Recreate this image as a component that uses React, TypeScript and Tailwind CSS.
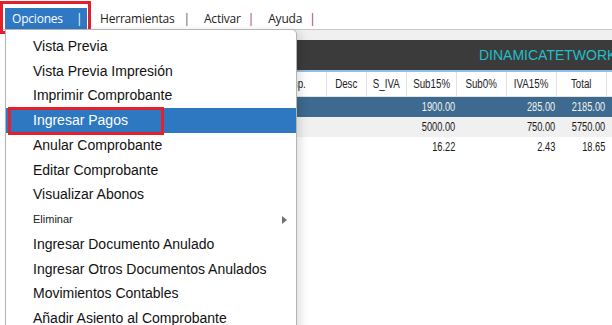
import React from "react";

const items: { label: string; small?: boolean; sub?: boolean; active?: boolean }[] = [
  { label: "Vista Previa" },
  { label: "Vista Previa Impresión" },
  { label: "Imprimir Comprobante" },
  { label: "Ingresar Pagos", active: true },
  { label: "Anular Comprobante" },
  { label: "Editar Comprobante" },
  { label: "Visualizar Abonos" },
  { label: "Eliminar", small: true, sub: true },
  { label: "Ingresar Documento Anulado" },
  { label: "Ingresar Otros Documentos Anulados" },
  { label: "Movimientos Contables" },
  { label: "Añadir Asiento al Comprobante" },
];

const headers = ["Comp.", "Desc", "S_IVA", "Sub15%", "Sub0%", "IVA15%", "Total", ""];

const rows = [
  { cls: "bg-[#3d6a8e] text-[#f2f2f2]", v: ["", "", "", "1900.00", "", "285.00", "2185.00", ""] },
  { cls: "bg-[#f0f0f0] text-[#1a1a1a]", v: ["", "", "", "5000.00", "", "750.00", "5750.00", ""] },
  { cls: "bg-white text-[#1a1a1a]", v: ["", "", "", "16.22", "", "2.43", "18.65", ""] },
];

export default function App() {
  return (
    <div className="relative w-[612px] h-[325px] overflow-hidden bg-white font-['Liberation_Sans',Arial,sans-serif]">
      {/* Top menu bar */}
      <div className="flex items-center h-[29px] pt-[8px] pl-[5px] font-['Open_Sans',sans-serif] text-[12px] tracking-[-0.2px] text-[#222]">
        <div className="relative flex items-center h-[21px] w-[82px] bg-[#2f78c4] text-white pl-[7px]">
          <span>Opciones</span>
          <span className="ml-[13px]">|</span>
          <div className="absolute left-[-5px] top-[-7px] w-[91px] h-[33px] border-[3px] border-[#e3202b]" />
        </div>
        <span className="ml-[13px]">Herramientas</span>
        <span className="ml-[9px] text-[#555]">|</span>
        <span className="ml-[14px]">Activar</span>
        <span className="ml-[7px] text-[#a3324a]">|</span>
        <span className="ml-[14px]">Ayuda</span>
        <span className="ml-[7px] text-[#a3324a]">|</span>
      </div>

      {/* Underlying page */}
      <div className="flex border-t border-[#c8c8c8]">
        <div className="w-[6px] shrink-0 bg-white border-r border-[#e4e4e4]" />
        <div className="flex-1">
          <div className="h-[10px] bg-[#f0f0f0]" />
          <div className="h-[30px] bg-[#3b3b3b] flex items-center pl-[473px] whitespace-nowrap overflow-hidden">
            <span className="text-[14px] text-[#22bfcc]">DINAMICATETWORKS</span>
          </div>
          <div className="h-[2px] bg-[#93bde6]" />
          <div className="grid grid-cols-[321px_40px_40px_50px_50px_50px_50px_1fr] h-[25px] border-b border-[#e4e4e4] text-[12.5px] text-[#222]">
            {headers.map((h, i) => (
              <div
                key={i}
                className={
                  "flex items-center border-r border-[#e2e2e2] " +
                  (i === 0 ? "justify-end pr-[20px]" : "justify-center")
                }
              >
                <span className={"inline-block scale-x-[0.78] " + (i === 0 ? "origin-right" : "origin-center")}>{h}</span>
              </div>
            ))}
          </div>
          {rows.map((r, ri) => (
            <div
              key={ri}
              className={"grid grid-cols-[321px_40px_40px_50px_50px_50px_50px_1fr] h-[20px] text-[12.5px] " + r.cls}
            >
              {r.v.map((c, ci) => (
                <div key={ci} className="flex items-center justify-end pr-[2px]">
                  <span className="inline-block scale-x-[0.74] origin-right">{c}</span>
                </div>
              ))}
            </div>
          ))}
        </div>
      </div>

      {/* Dropdown menu */}
      <div className="absolute left-[5px] top-[29px] w-[292px] h-[310px] bg-white border border-[#b4b4b4] rounded-tr-[5px] shadow-[4px_2px_8px_rgba(0,0,0,0.12)] pt-[4px]">
        {items.map((it, i) => (
          <div
            key={i}
            className={
              "relative flex items-center h-[24.75px] pl-[27px] pr-[8px] " +
              (it.active ? "bg-[#2e78c2] text-white" : "text-[#111]")
            }
          >
            <span className={it.small ? "text-[11px] text-[#222]" : "text-[14px]"}>{it.label}</span>
            {it.sub && (
              <svg className="ml-auto mr-[1px]" width="5" height="8" viewBox="0 0 5 8">
                <path d="M0 0 L5 4 L0 8 Z" fill="#707070" />
              </svg>
            )}
            {it.active && (
              <div className="absolute left-[2px] top-[-1px] w-[156px] h-[28px] border-[3px] border-[#e3202b]" />
            )}
          </div>
        ))}
      </div>
    </div>
  );
}
